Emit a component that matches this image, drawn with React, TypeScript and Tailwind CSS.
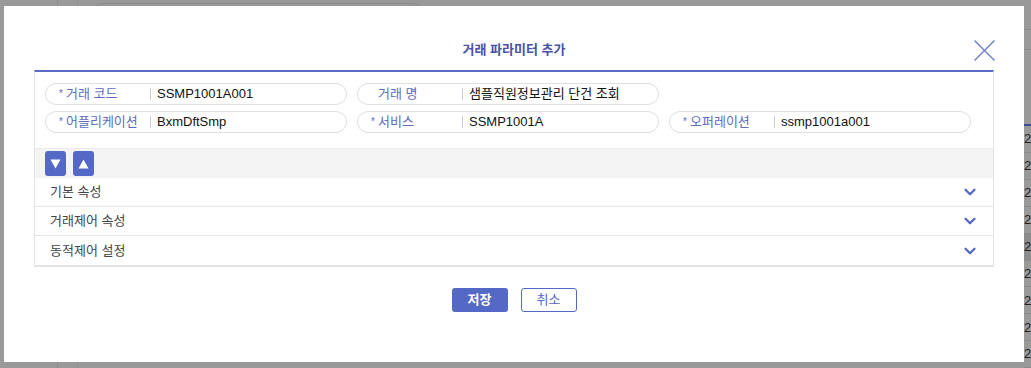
import { ChevronDown } from "lucide-react";

const font = { fontFamily: '"Liberation Sans", "Noto Sans CJK KR", sans-serif' };

type Field = { label: string; value: string; required: boolean };

const fieldRows: (Field | null)[][] = [
  [
    { label: "거래 코드", value: "SSMP1001A001", required: true },
    { label: "거래 명", value: "샘플직원정보관리 단건 조회", required: false },
    null,
  ],
  [
    { label: "어플리케이션", value: "BxmDftSmp", required: true },
    { label: "서비스", value: "SSMP1001A", required: true },
    { label: "오퍼레이션", value: "ssmp1001a001", required: true },
  ],
];

const sections = ["기본 속성", "거래제어 속성", "동적제어 설정"];

function FieldPill({ field }: { field: Field }) {
  return (
    <div className="flex h-[22px] w-[302px] items-center rounded-full border border-[#e0e0e0] bg-white pl-[13px]">
      <span className={`w-[7px] text-[10px] leading-none text-[#5f6bbd] ${field.required ? "" : "invisible"}`}>*</span>
      <span className="w-[84px] text-[13px] text-[#5f6bbd]">{field.label}</span>
      <span className="mr-[6px] h-[12px] w-px bg-[#c8c8d8]" />
      <span className="text-[13px] text-[#111]">{field.value}</span>
    </div>
  );
}

function BackgroundPage() {
  const rows = Array.from({ length: 9 });
  return (
    <div className="flex h-full w-full">
      <div className="flex w-[1024px] shrink-0">
        <div className="w-[58px] border-r border-[#8e8e8e]" />
        <div className="w-[20px] border-r border-[#8e8e8e]" />
        <div className="flex-1 pl-[15px] pt-[3px]">
          <div className="h-[10px] w-[330px] rounded-t-[10px] border border-[#8c8c8c]" />
        </div>
      </div>
      <div className="flex flex-1 flex-col overflow-hidden">
        <div className="h-[30px] border-b border-[#8e8e8e]" />
        <div className="h-[20px] border-b border-[#8e8e8e]" />
        <div className="h-[77px] border-b-2 border-[#3d4a99]" />
        {rows.map((_, i) => (
          <div
            key={i}
            className={`flex h-[27px] items-center border-b border-[#8a8a8a] text-[13px] text-[#222] ${i === 4 ? "bg-[#8c8c8c]" : ""}`}
          >
            2
          </div>
        ))}
      </div>
    </div>
  );
}

function ArrowButton({ up }: { up?: boolean }) {
  return (
    <button className="flex h-[25px] w-[21px] items-center justify-center rounded-[3px] bg-[#5468c6]">
      <svg viewBox="0 0 11 10" className="h-[10px] w-[11px]" fill="white">
        {up ? <polygon points="5.5,0.5 10.5,9.5 0.5,9.5" /> : <polygon points="0.5,0.5 10.5,0.5 5.5,9.5" />}
      </svg>
    </button>
  );
}

export default function App() {
  return (
    <div className="relative h-[368px] w-[1031px] overflow-hidden bg-[#999]" style={font}>
      <BackgroundPage />

      {/* Modal */}
      <div className="absolute left-[4px] top-[6px] flex h-[356px] w-[1020px] flex-col bg-white px-[30px]">
        <div className="relative flex h-[64px] items-center justify-center pt-[24px]">
          <h2 className="text-[13px] font-bold text-[#4a52a3]">거래 파라미터 추가</h2>
          <button className="absolute right-[-1px] top-[34px] h-[21px] w-[21px]">
            <svg viewBox="0 0 21 21" className="h-full w-full" fill="none" stroke="#6a78c8" strokeWidth="1.3">
              <path d="M0.5 0.5 L20.5 20.5 M20.5 0.5 L0.5 20.5" />
            </svg>
          </button>
        </div>

        <div className="border-x border-b-2 border-t-2 border-[#e4e4e4] border-t-[#5b6bc6]">
          <div className="flex flex-col gap-[6px] px-[10px] pb-[15px] pt-[11px]">
            {fieldRows.map((row, r) => (
              <div key={r} className="flex gap-[10px]">
                {row.map((f, i) => (f ? <FieldPill key={i} field={f} /> : <div key={i} className="w-[302px]" />))}
              </div>
            ))}
          </div>

          <div className="flex h-[30px] items-center gap-[7px] border-t border-[#ebebeb] bg-[#f4f4f4] px-[10px]">
            <ArrowButton />
            <ArrowButton up />
          </div>

          {sections.map((s, i) => (
            <div
              key={s}
              className={`flex h-[29px] items-center justify-between pl-[15px] pr-[14px] ${i < sections.length - 1 ? "border-b border-[#e6e6e6]" : ""}`}
            >
              <span className="text-[13px] text-[#444]">{s}</span>
              <ChevronDown className="h-[18px] w-[18px] text-[#5468c6]" strokeWidth={3} />
            </div>
          ))}
        </div>

        <div className="flex justify-center gap-[13px] pt-[21px]">
          <button className="h-[24px] w-[56px] rounded-[3px] bg-[#5468c6] text-[13px] font-bold text-white">저장</button>
          <button className="h-[24px] w-[56px] rounded-[3px] border border-[#5468c6] bg-white text-[13px] text-[#5468c6]">
            취소
          </button>
        </div>
      </div>
    </div>
  );
}
